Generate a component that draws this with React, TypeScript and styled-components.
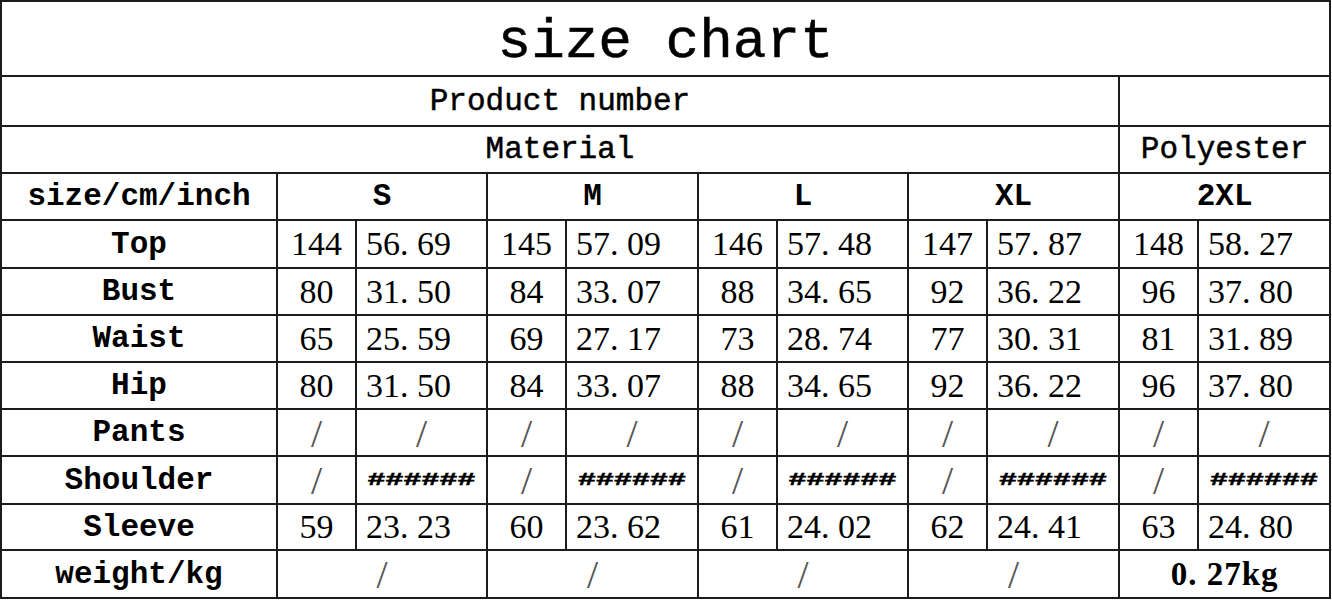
import React from "react";
import styled, { createGlobalStyle } from "styled-components";

const Global = createGlobalStyle`
  html, body { margin: 0; padding: 0; background: #fff; }
  body { width: 1332px; height: 600px; overflow: hidden; }
`;

const Table = styled.table`
  border-collapse: collapse;
  table-layout: fixed;
  width: 1330px;
  margin-left: 0;
  color: #000;
`;

const Row = styled.tr<{ $h: number }>`
  height: ${(p) => p.$h}px;
`;

type Kind = "title" | "head" | "label" | "size" | "cm" | "inch" | "slash" | "hash" | "weight";

const serifKinds: Kind[] = ["cm", "inch", "slash", "weight"];
const sizeOf: Record<Kind, string> = {
  title: "56px",
  head: "31px",
  label: "31px",
  size: "31px",
  cm: "34px",
  inch: "34px",
  slash: "40px",
  hash: "30px",
  weight: "33px",
};

const Cell = styled.td<{ $kind: Kind }>`
  border: 2px solid #1c1c1c;
  padding: 0;
  vertical-align: middle;
  white-space: nowrap;
  overflow: hidden;
  text-align: ${(p) => (p.$kind === "inch" ? "left" : "center")};
  padding-left: ${(p) => (p.$kind === "inch" ? "9px" : "0")};
  font-family: ${(p) =>
    serifKinds.includes(p.$kind)
      ? '"Liberation Serif", "Times New Roman", serif'
      : '"Liberation Mono", "Courier New", monospace'};
  font-size: ${(p) => sizeOf[p.$kind]};
  font-weight: ${(p) => (p.$kind === "label" || p.$kind === "size" || p.$kind === "weight" ? 700 : 400)};
  line-height: 1;
  ${(p) => (p.$kind === "title" ? "padding-top: 6px; -webkit-text-stroke: 0.5px #000;" : "")}
  ${(p) => (p.$kind === "head" ? "-webkit-text-stroke: 0.5px #000;" : "")}
  ${(p) => (p.$kind === "weight" ? "letter-spacing: 1px;" : "")}
  ${(p) => (p.$kind === "slash" ? "color: #555; padding-top: 2px;" : "")}
`;

const Hash = styled.span`
  display: inline-block;
  font-family: "Liberation Mono", "Courier New", monospace;
  font-size: 30px;
  font-weight: 700;
  transform: scaleY(0.6);
  -webkit-text-stroke: 0.8px #000;
  color: #000;
`;

const Col = styled.col<{ $w: number }>`
  width: ${(p) => p.$w}px;
`;

const widths = [276, 79, 131, 79, 132, 79, 131, 79, 132, 79, 132];

const sizes = ["S", "M", "L", "XL", "2XL"];

type Val = [string, string] | "slash" | "hash";

const data: { label: string; h: number; vals: Val[] }[] = [
  { label: "Top", h: 48, vals: [["144", "56. 69"], ["145", "57. 09"], ["146", "57. 48"], ["147", "57. 87"], ["148", "58. 27"]] },
  { label: "Bust", h: 47, vals: [["80", "31. 50"], ["84", "33. 07"], ["88", "34. 65"], ["92", "36. 22"], ["96", "37. 80"]] },
  { label: "Waist", h: 47, vals: [["65", "25. 59"], ["69", "27. 17"], ["73", "28. 74"], ["77", "30. 31"], ["81", "31. 89"]] },
  { label: "Hip", h: 47, vals: [["80", "31. 50"], ["84", "33. 07"], ["88", "34. 65"], ["92", "36. 22"], ["96", "37. 80"]] },
  { label: "Pants", h: 47, vals: ["slash", "slash", "slash", "slash", "slash"] },
  { label: "Shoulder", h: 48, vals: ["hash", "hash", "hash", "hash", "hash"] },
  { label: "Sleeve", h: 46, vals: [["59", "23. 23"], ["60", "23. 62"], ["61", "24. 02"], ["62", "24. 41"], ["63", "24. 80"]] },
];

function Pair({ v }: { v: Val }) {
  if (v === "slash") {
    return (
      <>
        <Cell $kind="slash">/</Cell>
        <Cell $kind="slash">/</Cell>
      </>
    );
  }
  if (v === "hash") {
    return (
      <>
        <Cell $kind="slash">/</Cell>
        <Cell $kind="hash">
          <Hash>######</Hash>
        </Cell>
      </>
    );
  }
  return (
    <>
      <Cell $kind="cm">{v[0]}</Cell>
      <Cell $kind="inch">{v[1]}</Cell>
    </>
  );
}

export default function App() {
  return (
    <>
      <Global />
      <Table>
        <colgroup>
          {widths.map((w, i) => (
            <Col key={i} $w={w} />
          ))}
        </colgroup>
        <tbody>
          <Row $h={75}>
            <Cell $kind="title" colSpan={11}>size chart</Cell>
          </Row>
          <Row $h={50}>
            <Cell $kind="head" colSpan={9}>Product number</Cell>
            <Cell $kind="head" colSpan={2}></Cell>
          </Row>
          <Row $h={47}>
            <Cell $kind="head" colSpan={9}>Material</Cell>
            <Cell $kind="head" colSpan={2}>Polyester</Cell>
          </Row>
          <Row $h={47}>
            <Cell $kind="label">size/cm/inch</Cell>
            {sizes.map((s) => (
              <Cell key={s} $kind="size" colSpan={2}>{s}</Cell>
            ))}
          </Row>
          {data.map((r) => (
            <Row key={r.label} $h={r.h}>
              <Cell $kind="label">{r.label}</Cell>
              {r.vals.map((v, i) => (
                <Pair key={i} v={v} />
              ))}
            </Row>
          ))}
          <Row $h={48}>
            <Cell $kind="label">weight/kg</Cell>
            <Cell $kind="slash" colSpan={2}>/</Cell>
            <Cell $kind="slash" colSpan={2}>/</Cell>
            <Cell $kind="slash" colSpan={2}>/</Cell>
            <Cell $kind="slash" colSpan={2}>/</Cell>
            <Cell $kind="weight" colSpan={2}>0. 27kg</Cell>
          </Row>
        </tbody>
      </Table>
    </>
  );
}
